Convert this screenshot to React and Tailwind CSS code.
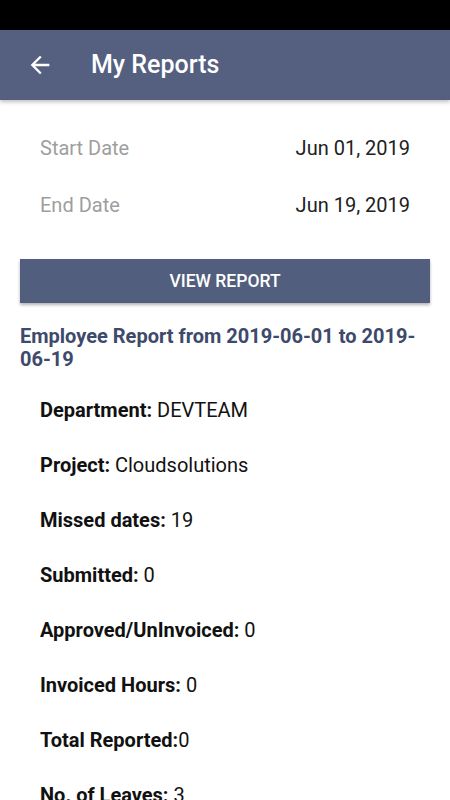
import React from 'react';

const stats = [
  { label: 'Department:', value: ' DEVTEAM' },
  { label: 'Project:', value: ' Cloudsolutions' },
  { label: 'Missed dates:', value: ' 19' },
  { label: 'Submitted:', value: ' 0' },
  { label: 'Approved/UnInvoiced:', value: ' 0' },
  { label: 'Invoiced Hours:', value: ' 0' },
  { label: 'Total Reported:', value: '0' },
  { label: 'No. of Leaves:', value: ' 3' },
];

const App = () => {
  return (
    <div className="w-[450px] h-[800px] overflow-hidden bg-white" style={{ fontFamily: 'Roboto, "Liberation Sans", sans-serif' }}>
      {/* status bar */}
      <div className="h-[30px] bg-black"></div>

      {/* app bar */}
      <div className="relative z-10 h-[70px] bg-[#556080] flex items-center shadow-[0_2px_4px_rgba(0,0,0,0.25)]">
        <svg className="ml-[26px] w-[28px] h-[28px]" viewBox="0 0 24 24" fill="white">
          <path d="M20 11H7.83l5.59-5.59L12 4l-8 8 8 8 1.41-1.41L7.83 13H20v-2z" />
        </svg>
        <h1 className="ml-[37px] text-[25px] font-medium text-white">My Reports</h1>
      </div>

      {/* date rows */}
      <div className="px-[40px] pt-[24px]">
        <div className="flex justify-between items-center h-[48px] text-[20px]">
          <span className="text-[#9e9e9e]">Start Date</span>
          <span className="text-[#212121]">Jun 01, 2019</span>
        </div>
        <div className="flex justify-between items-center h-[48px] mt-[9px] text-[20px]">
          <span className="text-[#9e9e9e]">End Date</span>
          <span className="text-[#212121]">Jun 19, 2019</span>
        </div>
      </div>

      {/* button */}
      <div className="px-[20px] mt-[30px]">
        <button className="w-full h-[44px] bg-[#525e7e] text-white text-[17.5px] font-medium shadow-[0_2px_3px_rgba(0,0,0,0.3)]">
          VIEW REPORT
        </button>
      </div>

      {/* report heading */}
      <h2 className="px-[20px] mt-[22px] text-[20px] leading-[23px] font-bold text-[#3d4a6b]">
        Employee Report from 2019-06-01 to 2019-06-19
      </h2>

      {/* stats */}
      <div className="px-[40px] mt-[27px] flex flex-col gap-[31px]">
        {stats.map((s, i) => (
          <div key={i} className="text-[20px] leading-[24px] text-[#111]">
            <span className="font-bold">{s.label}</span>
            <span>{s.value}</span>
          </div>
        ))}
      </div>
    </div>
  );
};

export default App;
